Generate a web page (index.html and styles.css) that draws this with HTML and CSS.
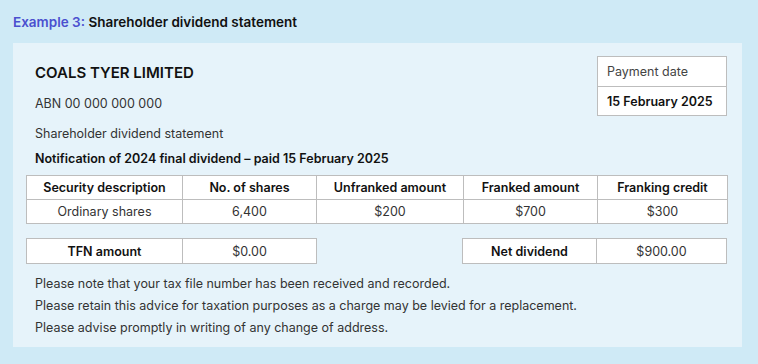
FILE: index.html
```html
<!DOCTYPE html>
<html lang="en">
<head>
<meta charset="utf-8">
<title>Example 3</title>
<link rel="stylesheet" href="styles.css">
</head>
<body>
<div class="title"><span class="label">Example 3:</span> Shareholder dividend statement</div>
<div class="panel">
  <div class="top">
    <div class="info">
      <div class="company">COALS TYER LIMITED</div>
      <div class="abn">ABN 00 000 000 000</div>
      <div class="sub">Shareholder dividend statement</div>
      <div class="notif">Notification of 2024 final dividend – paid 15 February 2025</div>
    </div>
    <div class="paybox">
      <div class="paylabel">Payment date</div>
      <div class="payvalue">15 February 2025</div>
    </div>
  </div>
  <table class="main">
    <colgroup><col class="c1"><col class="c2"><col class="c3"><col class="c4"><col class="c5"></colgroup>
    <tr><th>Security description</th><th>No. of shares</th><th>Unfranked amount</th><th>Franked amount</th><th>Franking credit</th></tr>
    <tr><td>Ordinary shares</td><td>6,400</td><td>$200</td><td>$700</td><td>$300</td></tr>
  </table>
  <div class="totals">
    <table class="small tfn">
      <colgroup><col class="c1"><col class="c2"></colgroup>
      <tr><th>TFN amount</th><td>$0.00</td></tr>
    </table>
    <table class="small net">
      <colgroup><col class="c4"><col class="c5"></colgroup>
      <tr><th>Net dividend</th><td>$900.00</td></tr>
    </table>
  </div>
  <div class="notes">
    <p>Please note that your tax file number has been received and recorded.</p>
    <p>Please retain this advice for taxation purposes as a charge may be levied for a replacement.</p>
    <p>Please advise promptly in writing of any change of address.</p>
  </div>
</div>
</body>
</html>
```
FILE: styles.css
```css
html, body {
  margin: 0;
  padding: 0;
}
body {
  background: #cfeaf6;
  font-family: Inter, "Noto Sans", "Liberation Sans", sans-serif;
  color: #333;
  width: 758px;
  height: 364px;
  overflow: hidden;
}
.title {
  height: 43px;
  box-sizing: border-box;
  padding: 14px 13px 0;
  font-size: 13.5px;
  line-height: 16px;
  font-weight: 600;
  color: #111;
}
.label {
  color: #4b50cf;
}
.panel {
  margin: 0 16px 0 13px;
  height: 304px;
  box-sizing: border-box;
  background: #e6f3fa;
  padding: 13px 15px 0 13px;
}
.top {
  display: flex;
  justify-content: space-between;
  align-items: flex-start;
}
.info {
  padding: 7px 0 0 9px;
}
.company {
  font-size: 15px;
  font-weight: 600;
  line-height: 20px;
  color: #111;
}
.abn, .sub {
  font-size: 12.5px;
  line-height: 20px;
  margin-top: 10px;
}
.abn {
  margin-top: 11px;
}
.notif {
  font-size: 12.5px;
  line-height: 20px;
  margin-top: 5px;
  font-weight: 600;
  color: #111;
}
.paybox {
  width: 130px;
  box-sizing: border-box;
  border: 1px solid #bdbdbd;
  background: #fff;
}
.paylabel, .payvalue {
  height: 29px;
  line-height: 29px;
  font-size: 12.5px;
  padding-left: 9px;
}
.paylabel {
  border-bottom: 1px solid #bdbdbd;
  color: #444;
}
.payvalue {
  font-weight: 600;
  color: #111;
  height: 28px;
}
table {
  border-collapse: collapse;
  background: #fff;
  table-layout: fixed;
}
.main {
  width: 701px;
  margin-top: 6px;
}
.c1 { width: 156px; }
.c2 { width: 134px; }
.c3 { width: 147px; }
.c4 { width: 134px; }
.c5 { width: 130px; }
th, td {
  border: 1px solid #bdbdbd;
  font-size: 12.5px;
  text-align: center;
  padding: 0;
  white-space: nowrap;
}
th {
  font-weight: 600;
  color: #111;
}
td {
  font-weight: 400;
  color: #333;
}
.main tr {
  height: 24px;
}
.totals {
  display: flex;
  justify-content: space-between;
  margin-top: 14px;
}
.small tr {
  height: 25px;
}
.tfn { width: 290px; }
.net { width: 264px; }
.notes {
  padding: 9px 0 0 9px;
}
.notes p {
  margin: 0;
  font-size: 12.5px;
  line-height: 22px;
  color: #333;
}
```
